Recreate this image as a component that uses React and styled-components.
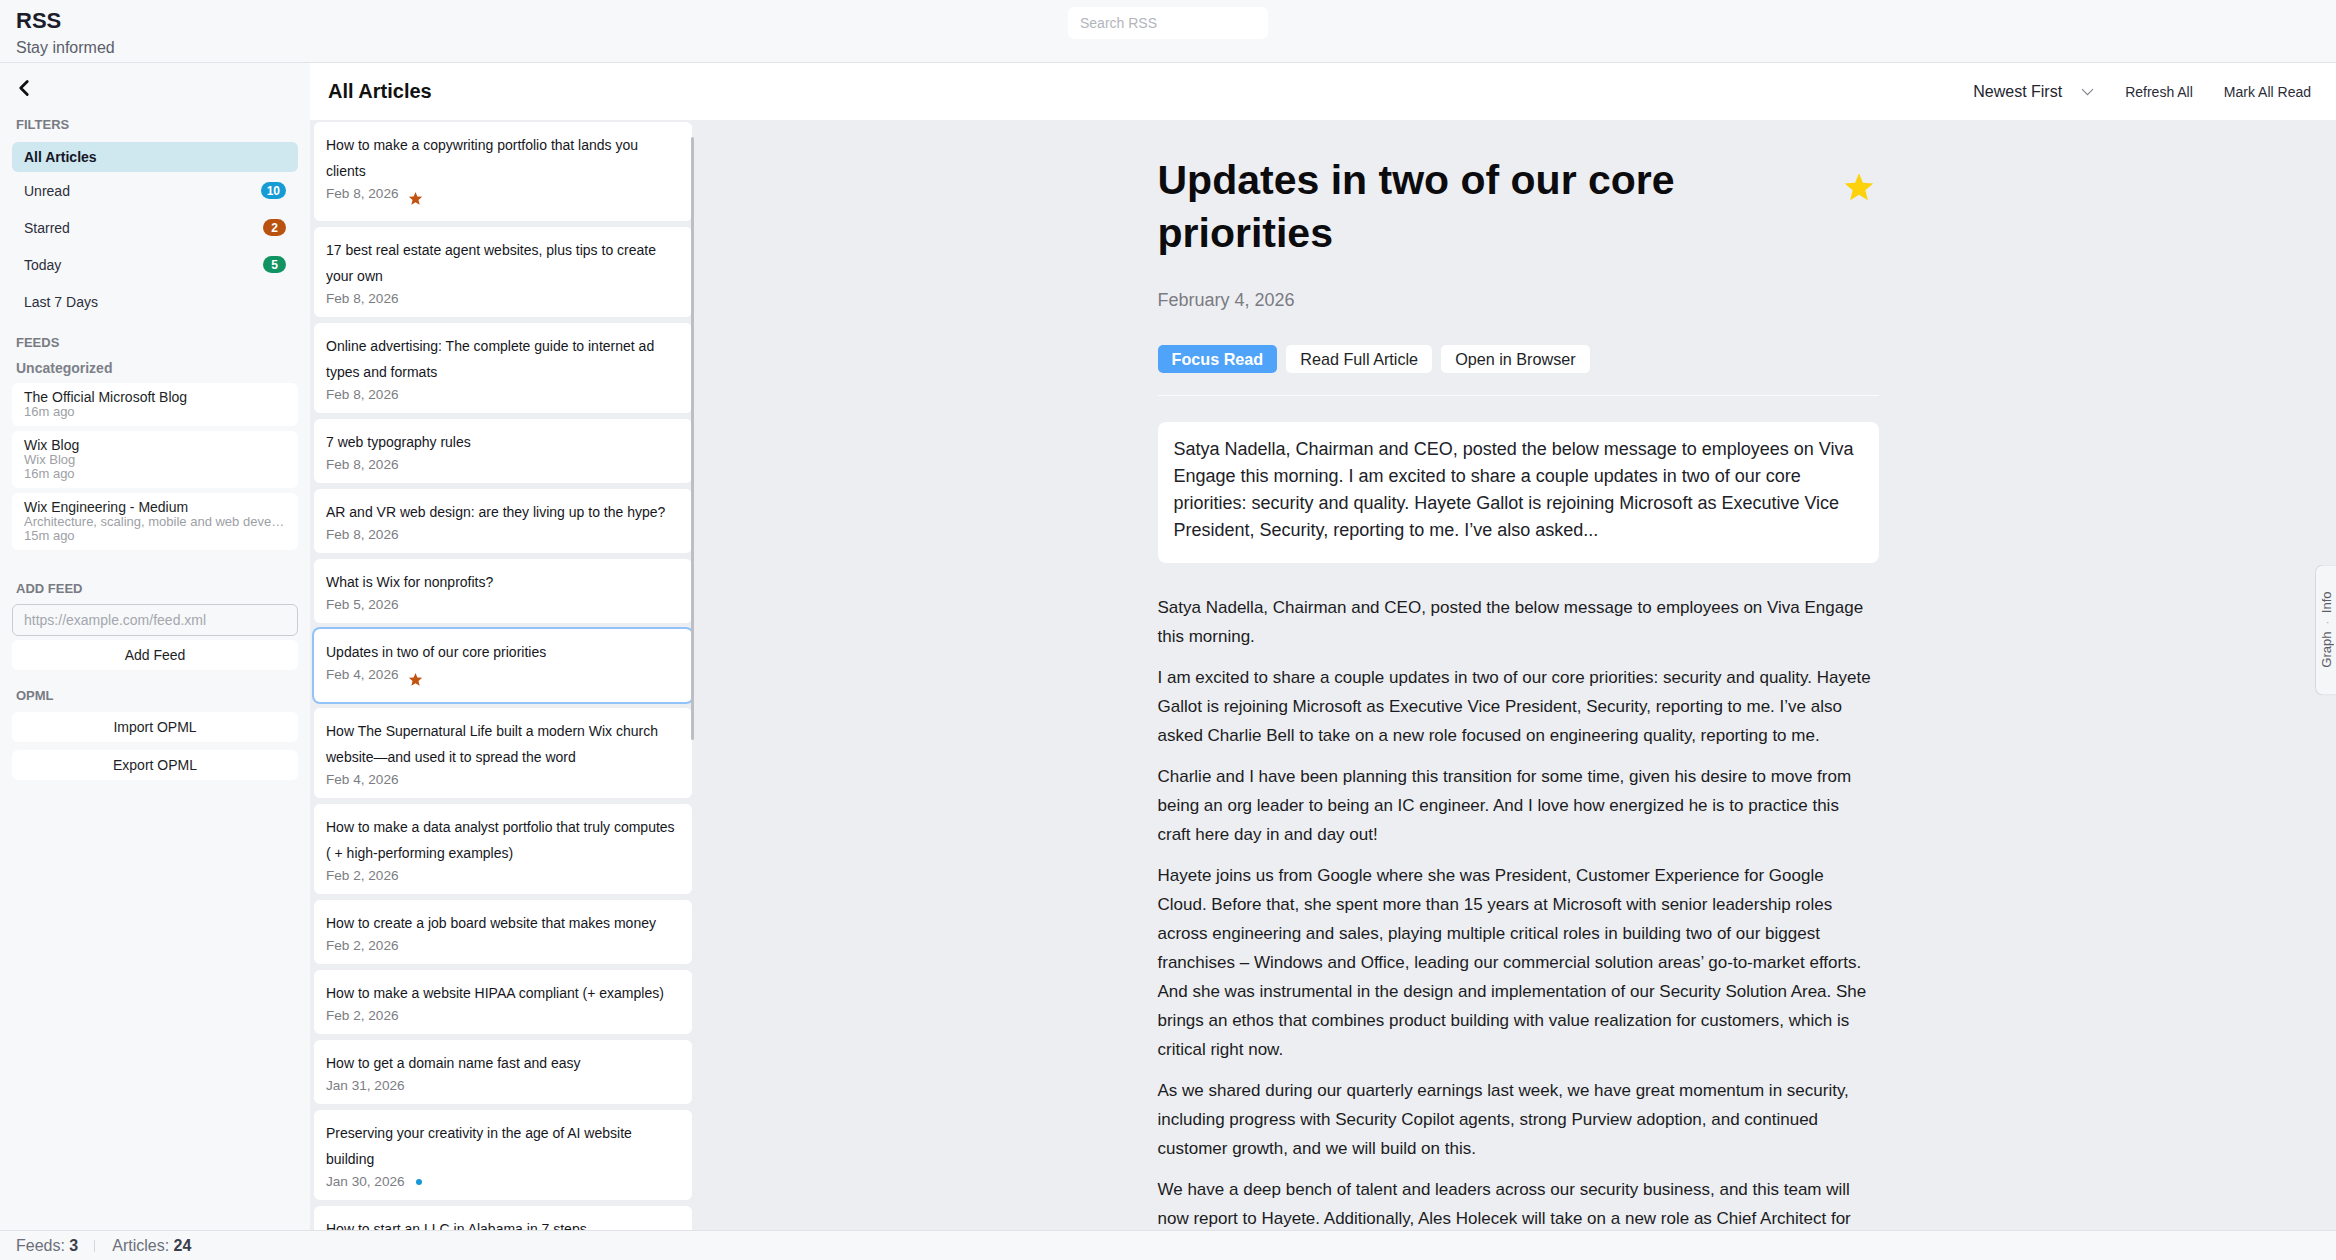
import React from 'react';
import styled, { createGlobalStyle } from 'styled-components';

const GlobalStyle = createGlobalStyle`
  html, body { margin: 0; padding: 0; height: 100%; }
  body {
    font-family: "Liberation Sans", Arial, Helvetica, sans-serif;
    background: #f7f8fa;
    color: #1d1f27;
    overflow: hidden;
  }
  #root { height: 100%; }
  *, *::before, *::after { box-sizing: border-box; }
  button, input { font-family: inherit; }
`;

const Shell = styled.div`
  height: 100vh;
  display: grid;
  grid-template-rows: 63px 1fr 30px;
`;

/* ---------- Header ---------- */
const Header = styled.header`
  display: grid;
  grid-template-columns: 1fr 200px 1fr;
  align-items: start;
  background: #f7f8fa;
  border-bottom: 1px solid #e2e4e8;
`;

const Brand = styled.div`
  padding: 9px 0 0 16px;
`;

const BrandTitle = styled.div`
  font-size: 22px;
  line-height: 24px;
  font-weight: 700;
  color: #1b1d2b;
`;

const BrandSub = styled.div`
  margin-top: 5px;
  font-size: 16px;
  line-height: 20px;
  color: #5b5e6b;
`;

const Search = styled.input`
  margin-top: 7px;
  height: 32px;
  width: 200px;
  border: none;
  border-radius: 6px;
  background: #ffffff;
  padding: 0 12px;
  font-size: 14px;
  color: #1d1f27;
  outline: none;
  &::placeholder { color: #b3b5bd; }
`;

/* ---------- Body ---------- */
const Body = styled.div`
  display: grid;
  grid-template-columns: 310px 1fr;
  min-height: 0;
  overflow: hidden;
`;

const Sidebar = styled.aside`
  background: #f7f8fa;
  padding: 12px 12px;
  display: flex;
  flex-direction: column;
  overflow: hidden;
`;

const BackButton = styled.button`
  width: 26px;
  height: 26px;
  padding: 0;
  margin-left: -1px;
  border: none;
  background: transparent;
  color: #111;
  display: flex;
`;

const SectionLabel = styled.div`
  margin-top: ${p => p.$mt}px;
  padding-left: 4px;
  font-size: 13px;
  line-height: 16px;
  font-weight: 700;
  text-transform: uppercase;
  color: #787b83;
`;

const GroupLabel = styled.div`
  margin-top: 9px;
  padding-left: 4px;
  font-size: 14px;
  line-height: 16px;
  font-weight: 700;
  color: #7d8088;
`;

const NavList = styled.nav`
  margin-top: 9px;
  display: flex;
  flex-direction: column;
`;

const NavItem = styled.div`
  height: ${p => (p.$active ? 30 : 37)}px;
  display: flex;
  align-items: center;
  justify-content: space-between;
  padding: 0 12px;
  border-radius: 6px;
  font-size: 14px;
  font-weight: ${p => (p.$active ? 700 : 400)};
  color: ${p => (p.$active ? '#141726' : '#2c2f3b')};
  background: ${p => (p.$active ? '#cfe7ef' : 'transparent')};
`;

const Badge = styled.span`
  min-width: 23px;
  height: 17px;
  padding: 0 6px;
  border-radius: 9px;
  display: inline-flex;
  align-items: center;
  justify-content: center;
  font-size: 12px;
  font-weight: 700;
  color: #fff;
  background: ${p => p.$color};
`;

const FeedList = styled.div`
  margin-top: 7px;
  display: flex;
  flex-direction: column;
  gap: 5px;
`;

const FeedCard = styled.div`
  background: #fff;
  border-radius: 6px;
  padding: 6px 12px 7px;
  min-width: 0;
`;

const FeedTitle = styled.div`
  font-size: 14px;
  line-height: 16px;
  color: #1d1f27;
`;

const FeedMeta = styled.div`
  font-size: 13px;
  line-height: 14px;
  color: #9d9fa6;
  white-space: nowrap;
  overflow: hidden;
  text-overflow: ellipsis;
`;

const FeedInput = styled.input`
  margin-top: 7px;
  height: 32px;
  width: 100%;
  border: 1px solid #c9ccd3;
  border-radius: 6px;
  background: #f7f8fa;
  padding: 0 11px;
  font-size: 14px;
  outline: none;
  &::placeholder { color: #a4a7ae; }
`;

const SideButton = styled.button`
  margin-top: ${p => p.$mt}px;
  height: 30px;
  width: 100%;
  border: none;
  border-radius: 6px;
  background: #fff;
  font-size: 14px;
  color: #1d1f27;
`;

/* ---------- Main ---------- */
const Main = styled.main`
  display: flex;
  flex-direction: column;
  min-width: 0;
  min-height: 0;
`;

const Toolbar = styled.div`
  height: 57px;
  flex: none;
  background: #fff;
  display: flex;
  align-items: center;
  justify-content: space-between;
  padding: 0 25px 0 18px;
`;

const ToolbarTitle = styled.h2`
  margin: 0;
  font-size: 20px;
  font-weight: 700;
  color: #111;
`;

const ToolbarActions = styled.div`
  display: flex;
  align-items: center;
  gap: 31px;
`;

const SortSelect = styled.div`
  display: flex;
  align-items: center;
  gap: 19px;
  font-size: 16px;
  color: #23252f;
`;

const ToolButton = styled.button`
  border: none;
  background: transparent;
  padding: 0;
  font-size: 14px;
  color: #2a2c38;
`;

const Content = styled.div`
  flex: 1;
  min-height: 0;
  display: flex;
  background: #edeef2;
`;

const ListPane = styled.div`
  position: relative;
  width: 384px;
  flex: none;
  overflow: hidden;
  padding: 2px 2px 0 4px;
  display: flex;
  flex-direction: column;
  gap: 6px;
`;

const ScrollThumb = styled.div`
  position: absolute;
  right: 0;
  top: 17px;
  width: 3px;
  height: 603px;
  border-radius: 2px;
  background: #bdbec3;
`;

const ArticleCard = styled.div`
  flex: none;
  background: #fff;
  border-radius: 6px;
  padding: 10px 12px 8px;
  box-shadow: ${p => (p.$selected ? '0 0 0 2px #92c3f8' : 'none')};
`;

const ArticleTitle = styled.div`
  font-size: 14px;
  line-height: 26px;
  color: #16171d;
`;

const ArticleMeta = styled.div`
  display: flex;
  align-items: flex-start;
  gap: 9px;
`;

const ArticleDate = styled.span`
  font-size: 13.6px;
  line-height: 20px;
  color: #7c7d83;
`;

const StarMark = styled.span`
  display: flex;
  margin-top: 7px;
  margin-bottom: 7px;
  color: #c2520f;
`;

const UnreadDot = styled.span`
  width: 6px;
  height: 6px;
  margin-top: 7px;
  margin-left: 2px;
  border-radius: 50%;
  background: #1699d6;
`;

const Reader = styled.section`
  flex: 1;
  min-width: 0;
  overflow: hidden;
  padding: 34px 0 0 6px;
`;

const ReaderInner = styled.article`
  width: 721px;
  margin: 0 auto;
`;

const TitleRow = styled.div`
  display: flex;
  align-items: flex-start;
  gap: 16px;
`;

const ReaderTitle = styled.h1`
  flex: 1;
  margin: 0;
  font-size: 41px;
  line-height: 53px;
  font-weight: 700;
  color: #0c0c0f;
`;

const StarButton = styled.button`
  flex: none;
  width: 40px;
  height: 40px;
  margin-top: 13px;
  padding: 0;
  border: none;
  background: transparent;
  display: flex;
  align-items: center;
  justify-content: center;
  color: #fdd20a;
`;

const ReaderDate = styled.div`
  margin-top: 28px;
  font-size: 18px;
  line-height: 24px;
  color: #7a7b82;
`;

const ActionRow = styled.div`
  margin-top: 33px;
  display: flex;
  gap: 9px;
`;

const ActionButton = styled.button`
  height: 28px;
  padding: 0 14px;
  border: none;
  border-radius: 5px;
  font-size: 16.2px;
  font-weight: ${p => (p.$primary ? 700 : 400)};
  color: ${p => (p.$primary ? '#ffffff' : '#1d1f27')};
  background: ${p => (p.$primary ? '#4fa3f8' : '#ffffff')};
`;

const Divider = styled.hr`
  margin: 22px 0 0;
  border: none;
  height: 1px;
  background: #fbfbfc;
`;

const Summary = styled.div`
  margin-top: 26px;
  background: #fff;
  border-radius: 8px;
  padding: 14px 16px 19px;
  font-size: 18px;
  line-height: 27px;
  color: #202127;
`;

const ArticleBody = styled.div`
  margin-top: 30px;
  padding-right: 3px;
  font-size: 17px;
  line-height: 29px;
  color: #1b1c22;
  & p { margin: 0 0 12px; }
`;

const SideTab = styled.div`
  position: fixed;
  right: 0;
  top: 50%;
  transform: translateY(-50%);
  width: 21px;
  height: 131px;
  border: 1px solid #d6d8dd;
  border-right: none;
  border-radius: 8px 0 0 8px;
  background: #f5f6f8;
  display: flex;
  align-items: center;
  justify-content: center;
`;

const SideTabText = styled.span`
  writing-mode: vertical-rl;
  transform: rotate(180deg);
  font-size: 13px;
  color: #5b5e68;
  white-space: nowrap;
  & b { font-weight: 400; color: #b5b7bd; margin: 7px 0; }
`;

const Footer = styled.footer`
  border-top: 1px solid #e1e3e7;
  background: #f7f8fa;
  display: flex;
  align-items: center;
  padding: 0 16px;
  font-size: 16px;
  color: #6c6f79;
  & strong { color: #3b3e48; }
`;

const FooterSep = styled.span`
  width: 1px;
  height: 12px;
  margin: 0 17px 0 16px;
  background: #d4d6db;
`;

/* ---------- Icons ---------- */
const ChevronLeft = () => (
  <svg width="26" height="26" viewBox="0 0 24 24" fill="none" stroke="currentColor" strokeWidth="2.6" strokeLinecap="round" strokeLinejoin="round">
    <path d="M15 18l-6-6 6-6" />
  </svg>
);

const ChevronDown = () => (
  <svg width="13" height="8" viewBox="0 0 13 8" fill="none" stroke="#80828a" strokeWidth="1.1">
    <path d="M1 1.2l5.5 5.5L12 1.2" />
  </svg>
);

const StarIcon = ({ size }) => (
  <svg width={size} height={size} viewBox="0 0 24 24" fill="currentColor">
    <path d="M12 1.6l2.95 7.2 7.75.55-5.95 5 1.9 7.55L12 17.8l-6.65 4.1 1.9-7.55-5.95-5 7.75-.55z" />
  </svg>
);

/* ---------- Data ---------- */
const filters = [
  { label: 'All Articles', active: true },
  { label: 'Unread', count: 10, color: '#169bd5' },
  { label: 'Starred', count: 2, color: '#b9520f' },
  { label: 'Today', count: 5, color: '#119462' },
  { label: 'Last 7 Days' },
];

const feeds = [
  { title: 'The Official Microsoft Blog', lines: ['16m ago'] },
  { title: 'Wix Blog', lines: ['Wix Blog', '16m ago'] },
  { title: 'Wix Engineering - Medium', lines: ['Architecture, scaling, mobile and web development at Wix', '15m ago'] },
];

const articles = [
  { title: 'How to make a copywriting portfolio that lands you clients', date: 'Feb 8, 2026', starred: true },
  { title: '17 best real estate agent websites, plus tips to create your own', date: 'Feb 8, 2026' },
  { title: 'Online advertising: The complete guide to internet ad types and formats', date: 'Feb 8, 2026' },
  { title: '7 web typography rules', date: 'Feb 8, 2026' },
  { title: 'AR and VR web design: are they living up to the hype?', date: 'Feb 8, 2026' },
  { title: 'What is Wix for nonprofits?', date: 'Feb 5, 2026' },
  { title: 'Updates in two of our core priorities', date: 'Feb 4, 2026', starred: true, selected: true },
  { title: 'How The Supernatural Life built a modern Wix church website\u2014and used it to spread the word', date: 'Feb 4, 2026' },
  { title: 'How to make a data analyst portfolio that truly computes ( + high-performing examples)', date: 'Feb 2, 2026' },
  { title: 'How to create a job board website that makes money', date: 'Feb 2, 2026' },
  { title: 'How to make a website HIPAA compliant (+ examples)', date: 'Feb 2, 2026' },
  { title: 'How to get a domain name fast and easy', date: 'Jan 31, 2026' },
  { title: 'Preserving your creativity in the age of AI website building', date: 'Jan 30, 2026', unread: true },
  { title: 'How to start an LLC in Alabama in 7 steps', date: 'Jan 29, 2026' },
  { title: 'How to start a blog and make money', date: 'Jan 28, 2026' },
];

const paragraphs = [
  'Satya Nadella, Chairman and CEO, posted the below message to employees on Viva Engage this morning.',
  'I am excited to share a couple updates in two of our core priorities: security and quality. Hayete Gallot is rejoining Microsoft as Executive Vice President, Security, reporting to me. I\u2019ve also asked Charlie Bell to take on a new role focused on engineering quality, reporting to me.',
  'Charlie and I have been planning this transition for some time, given his desire to move from being an org leader to being an IC engineer. And I love how energized he is to practice this craft here day in and day out!',
  'Hayete joins us from Google where she was President, Customer Experience for Google Cloud. Before that, she spent more than 15 years at Microsoft with senior leadership roles across engineering and sales, playing multiple critical roles in building two of our biggest franchises \u2013 Windows and Office, leading our commercial solution areas\u2019 go-to-market efforts. And she was instrumental in the design and implementation of our Security Solution Area. She brings an ethos that combines product building with value realization for customers, which is critical right now.',
  'As we shared during our quarterly earnings last week, we have great momentum in security, including progress with Security Copilot agents, strong Purview adoption, and continued customer growth, and we will build on this.',
  'We have a deep bench of talent and leaders across our security business, and this team will now report to Hayete. Additionally, Ales Holecek will take on a new role as Chief Architect for Security, bringing his experience shipping some of our most important products.',
];

export default function App() {
  return (
    <>
      <GlobalStyle />
      <Shell>
        <Header>
          <Brand>
            <BrandTitle>RSS</BrandTitle>
            <BrandSub>Stay informed</BrandSub>
          </Brand>
          <Search placeholder="Search RSS" />
          <div />
        </Header>

        <Body>
          <Sidebar>
            <BackButton aria-label="Collapse sidebar"><ChevronLeft /></BackButton>

            <SectionLabel $mt={16}>Filters</SectionLabel>
            <NavList>
              {filters.map(f => (
                <NavItem key={f.label} $active={f.active}>
                  <span>{f.label}</span>
                  {f.count != null && <Badge $color={f.color}>{f.count}</Badge>}
                </NavItem>
              ))}
            </NavList>

            <SectionLabel $mt={15}>Feeds</SectionLabel>
            <GroupLabel>Uncategorized</GroupLabel>
            <FeedList>
              {feeds.map(feed => (
                <FeedCard key={feed.title}>
                  <FeedTitle>{feed.title}</FeedTitle>
                  {feed.lines.map((l, i) => (
                    <FeedMeta key={i}>{l}</FeedMeta>
                  ))}
                </FeedCard>
              ))}
            </FeedList>

            <SectionLabel $mt={31}>Add Feed</SectionLabel>
            <FeedInput placeholder="https://example.com/feed.xml" />
            <SideButton $mt={4}>Add Feed</SideButton>

            <SectionLabel $mt={18}>OPML</SectionLabel>
            <SideButton $mt={8}>Import OPML</SideButton>
            <SideButton $mt={8}>Export OPML</SideButton>
          </Sidebar>

          <Main>
            <Toolbar>
              <ToolbarTitle>All Articles</ToolbarTitle>
              <ToolbarActions>
                <SortSelect>
                  <span>Newest First</span>
                  <ChevronDown />
                </SortSelect>
                <ToolButton>Refresh All</ToolButton>
                <ToolButton>Mark All Read</ToolButton>
              </ToolbarActions>
            </Toolbar>

            <Content>
              <ListPane>
                {articles.map(a => (
                  <ArticleCard key={a.title} $selected={a.selected}>
                    <ArticleTitle>{a.title}</ArticleTitle>
                    <ArticleMeta>
                      <ArticleDate>{a.date}</ArticleDate>
                      {a.starred && <StarMark><StarIcon size={15} /></StarMark>}
                      {a.unread && <UnreadDot />}
                    </ArticleMeta>
                  </ArticleCard>
                ))}
                <ScrollThumb />
              </ListPane>

              <Reader>
                <ReaderInner>
                  <TitleRow>
                    <ReaderTitle>Updates in two of our core priorities</ReaderTitle>
                    <StarButton aria-label="Starred"><StarIcon size={32} /></StarButton>
                  </TitleRow>
                  <ReaderDate>February 4, 2026</ReaderDate>
                  <ActionRow>
                    <ActionButton $primary>Focus Read</ActionButton>
                    <ActionButton>Read Full Article</ActionButton>
                    <ActionButton>Open in Browser</ActionButton>
                  </ActionRow>
                  <Divider />
                  <Summary>
                    Satya Nadella, Chairman and CEO, posted the below message to employees on Viva Engage this morning. I am excited to share a couple updates in two of our core priorities: security and quality. Hayete Gallot is rejoining Microsoft as Executive Vice President, Security, reporting to me. I’ve also asked...
                  </Summary>
                  <ArticleBody>
                    {paragraphs.map((p, i) => (
                      <p key={i}>{p}</p>
                    ))}
                  </ArticleBody>
                </ReaderInner>
              </Reader>
            </Content>
          </Main>
        </Body>

        <Footer>
          <span>Feeds: <strong>3</strong></span>
          <FooterSep />
          <span>Articles: <strong>24</strong></span>
        </Footer>

        <SideTab>
          <SideTabText>Graph<b>·</b>Info</SideTabText>
        </SideTab>
      </Shell>
    </>
  );
}
